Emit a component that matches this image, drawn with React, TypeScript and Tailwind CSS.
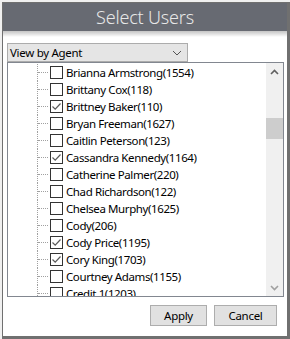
const users = [
  { name: 'Brianna Armstrong(1554)', checked: false },
  { name: 'Brittany Cox(118)', checked: false },
  { name: 'Brittney Baker(110)', checked: true },
  { name: 'Bryan Freeman(1627)', checked: false },
  { name: 'Caitlin Peterson(123)', checked: false },
  { name: 'Cassandra Kennedy(1164)', checked: true },
  { name: 'Catherine Palmer(220)', checked: false },
  { name: 'Chad Richardson(122)', checked: false },
  { name: 'Chelsea Murphy(1625)', checked: false },
  { name: 'Cody(206)', checked: false },
  { name: 'Cody Price(1195)', checked: true },
  { name: 'Cory King(1703)', checked: true },
  { name: 'Courtney Adams(1155)', checked: false },
  { name: 'Credit 1(1203)', checked: false },
]

const font = { fontFamily: '"Noto Sans", "Open Sans", sans-serif' }

const UserRow = ({ name, checked }: { name: string; checked: boolean }) => (
  <div className="flex items-center h-[17px]">
    <div className="w-[29px] h-full" />
    <div className="h-full w-[1px] border-l border-dotted border-[#a0a0a0]" />
    <div className="w-[10px] border-t border-dotted border-[#a0a0a0] mr-[2px]" />
    <div className="w-[13px] h-[13px] border border-[#333] bg-white flex items-center justify-center">
      {checked && (
        <svg width="11" height="11" viewBox="0 0 11 11">
          <path d="M1.5 5.5 L4.2 8.2 L9.5 2.5" fill="none" stroke="#5a5a5a" strokeWidth="1.2" />
        </svg>
      )}
    </div>
    <span className="ml-[3px] text-[11.5px] tracking-[-0.4px] text-black leading-none whitespace-nowrap">{name}</span>
  </div>
)

export default function App() {
  return (
    <div className="w-[290px] h-[339px] bg-[#f0f0f0] pl-[2px] pt-[2px] overflow-hidden" style={font}>
      <div className="w-[288px] h-[337px] bg-white border-t border-l border-r-[3px] border-b-[3px] border-[#707070] flex flex-col">
        <div className="h-[28px] bg-[#676a72] flex items-center justify-center">
          <span className="text-[18px] tracking-[-0.2px] text-[#e8e8e8] font-light leading-none">Select Users</span>
        </div>
        <div className="h-[6px] bg-gradient-to-b from-[#c4c4c4] to-white" />
        <div className="pl-[4px] pt-[6px]">
          <div className="w-[181px] h-[19px] bg-[#e5e5e5] border border-[#acacac] flex items-center justify-between pl-[2px] pr-[5px]">
            <span className="text-[11.5px] tracking-[-0.3px] text-black leading-none">View by Agent</span>
            <svg width="10" height="6" viewBox="0 0 10 6">
              <path d="M1 1 L5 5 L9 1" fill="none" stroke="#555" strokeWidth="1" />
            </svg>
          </div>
          <div className="w-[277px] h-[235px] border border-[#828790] flex overflow-hidden">
            <div className="flex-1 pt-[1px] overflow-hidden">
              {users.map((u) => (
                <UserRow key={u.name} name={u.name} checked={u.checked} />
              ))}
            </div>
            <div className="w-[17px] bg-[#f0f0f0] flex flex-col">
              <div className="h-[17px] flex items-center justify-center">
                <svg width="9" height="6" viewBox="0 0 9 6">
                  <path d="M1 5 L4.5 1.5 L8 5" fill="none" stroke="#606060" strokeWidth="1.6" />
                </svg>
              </div>
              <div className="h-[38px]" />
              <div className="h-[21px] bg-[#cdcdcd]" />
              <div className="flex-1" />
              <div className="h-[17px] flex items-center justify-center">
                <svg width="9" height="6" viewBox="0 0 9 6">
                  <path d="M1 1 L4.5 4.5 L8 1" fill="none" stroke="#a0a0a0" strokeWidth="1.6" />
                </svg>
              </div>
            </div>
          </div>
        </div>
        <div className="flex justify-end gap-[7px] pr-[10px] pt-[8px]">
          <button className="w-[57px] h-[21px] bg-[#e1e1e1] border border-[#adadad] text-[11.5px] tracking-[-0.3px] text-black leading-none">
            Apply
          </button>
          <button className="w-[63px] h-[21px] bg-[#e1e1e1] border border-[#adadad] text-[11.5px] tracking-[-0.3px] text-black leading-none">
            Cancel
          </button>
        </div>
      </div>
    </div>
  )
}
